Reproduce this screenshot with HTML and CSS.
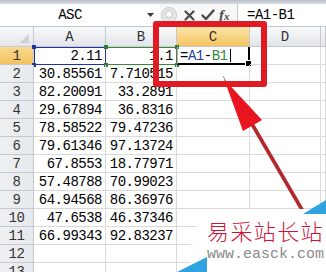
FILE: index.html
```html
<!DOCTYPE html>
<html>
<head>
<meta charset="utf-8">
<link rel="stylesheet" href="styles.css">
</head>
<body>
<div class="app">
  <div class="strip"></div>
  <div class="fbar">
    <div class="namebox">ASC</div>
    <div class="dd"><svg width="7" height="4" viewBox="0 0 7 4"><path d="M0 0H7L3.5 4Z" fill="#3a3a3a"/></svg></div>
    <div class="tools">
      <span class="knob"></span>
      <svg class="ico-x" width="11" height="11" viewBox="0 0 11 11"><path d="M1.5 1.5L9.5 9.5M9.5 1.5L1.5 9.5" stroke="#4a4a4a" stroke-width="2.2" stroke-linecap="round"/></svg>
      <svg class="ico-ok" width="14" height="12" viewBox="0 0 14 12"><path d="M1.5 6.5L5 10L12.5 1.5" fill="none" stroke="#4a4a4a" stroke-width="2.4" stroke-linecap="round" stroke-linejoin="round"/></svg>
      <span class="fx">f<span class="fxx">x</span></span>
    </div>
    <div class="formula">=A1-B1</div>
  </div>
  <div class="sheet">
    <div class="corner"><span class="tri"></span></div>
    <div class="ch">A</div><div class="ch">B</div><div class="ch sel">C</div><div class="ch">D</div><div class="ch"></div>

    <div class="rh sel">1</div>
    <div class="c n">2.11<span class="ref blue"><i class="h tl"></i><i class="h tr"></i><i class="h bl"></i><i class="h br"></i></span></div>
    <div class="c n">1.1<span class="ref green"><i class="h tl"></i><i class="h tr"></i><i class="h bl"></i><i class="h br"></i></span></div>
    <div class="c fcell">=<span class="rb">A1</span>-<span class="rg">B1</span><i class="caret"></i><span class="edit"><i class="fill"></i></span></div>
    <div class="c"></div><div class="c"></div>

    <div class="rh">2</div><div class="c n">30.85561</div><div class="c n">7.710515</div><div class="c"></div><div class="c"></div><div class="c"></div>
    <div class="rh">3</div><div class="c n">82.20091</div><div class="c n">33.2891</div><div class="c"></div><div class="c"></div><div class="c"></div>
    <div class="rh">4</div><div class="c n">29.67894</div><div class="c n">36.8316</div><div class="c"></div><div class="c"></div><div class="c"></div>
    <div class="rh">5</div><div class="c n">78.58522</div><div class="c n">79.47236</div><div class="c"></div><div class="c"></div><div class="c"></div>
    <div class="rh">6</div><div class="c n">79.61346</div><div class="c n">97.13724</div><div class="c"></div><div class="c"></div><div class="c"></div>
    <div class="rh">7</div><div class="c n">67.8553</div><div class="c n">18.77971</div><div class="c"></div><div class="c"></div><div class="c"></div>
    <div class="rh">8</div><div class="c n">57.48788</div><div class="c n">70.99023</div><div class="c"></div><div class="c"></div><div class="c"></div>
    <div class="rh">9</div><div class="c n">64.94568</div><div class="c n">86.36976</div><div class="c"></div><div class="c"></div><div class="c"></div>
    <div class="rh">10</div><div class="c n">47.6538</div><div class="c n">46.37346</div><div class="c"></div><div class="c"></div><div class="c"></div>
    <div class="rh">11</div><div class="c n">66.99343</div><div class="c n">92.83237</div><div class="c"></div><div class="c"></div><div class="c"></div>
    <div class="rh">12</div><div class="c"></div><div class="c"></div><div class="c"></div><div class="c"></div><div class="c"></div>
    <div class="rh">13</div><div class="c"></div><div class="c"></div><div class="c"></div><div class="c"></div><div class="c"></div>
  </div>

  <div class="redbox"></div>
  <svg class="arrow" width="326" height="272" viewBox="0 0 326 272">
    <line x1="252" y1="124" x2="308" y2="220" stroke="#b3262c" stroke-width="3.6"/>
    <line x1="223" y1="76" x2="232" y2="92" stroke="#9a9a9a" stroke-width="1"/>
    <polygon points="224,79 262,120 243,131" fill="#e8141f"/>
  </svg>

  <div class="wm">
    <svg class="wm-bg" width="156" height="76" viewBox="0 0 156 76">
      <polygon points="44,13 156,13 156,76 20,76 21,46 28,28" fill="#ffffff"/>
      <polygon points="133,18 156,4 156,18" fill="#2fa3df"/>
      <polygon points="7,76 37,61 37,76" fill="#2fa3df"/>
    </svg>
    <div class="wm-title">易采站长站</div>
    <div class="wm-url">www.easck.com</div>
  </div>
</div>
</body>
</html>
```

FILE: styles.css
```css
body {
  margin: 0;
  background: #fff;
}

.app {
  position: relative;
  width: 326px;
  height: 272px;
  overflow: hidden;
  background: #fff;
  font-family: "Liberation Mono", "DejaVu Sans Mono", monospace;
  font-size: 14px;
  color: #000;
}

.strip {
  height: 4px;
  background: linear-gradient(#b9bec5, #d9dde2);
}

.fbar {
  display: flex;
  align-items: center;
  height: 23px;
  box-sizing: border-box;
  border-bottom: 1px solid #c3c8ce;
  background: #fff;
}

.namebox {
  width: 140px;
  text-align: center;
  letter-spacing: -0.5px;
}

.dd {
  width: 20px;
  display: flex;
  justify-content: center;
  align-items: center;
}

.tools {
  width: 77px;
  height: 22px;
  display: flex;
  align-items: center;
  border-right: 1px solid #c8c8c8;
  background: #f7f7f7;
}

.knob {
  width: 14px;
  height: 14px;
  margin-left: 1px;
  border-radius: 50%;
  border: 1px solid #c9c9c9;
  background: radial-gradient(circle at 50% 45%, #ffffff 0 2px, #d6d6d6 3px, #eeeeee 7px);
}

.ico-x {
  margin-left: 7px;
}

.ico-ok {
  margin-left: 6px;
}

.fx {
  margin-left: 4px;
  font-family: "Liberation Serif", serif;
  font-style: italic;
  font-weight: bold;
  font-size: 15px;
  color: #4a4a4a;
}

.fxx {
  font-size: 11px;
}

.formula {
  padding-left: 9px;
  letter-spacing: -0.5px;
}

.sheet {
  position: relative;
  display: grid;
  grid-template-columns: 34px 72px 71px 73px 71px 5px;
  grid-template-rows: 20px;
  grid-auto-rows: 18px;
}

.sheet > div {
  position: relative;
  box-sizing: border-box;
  border-right: 1px solid #dadada;
  border-bottom: 1px solid #dadada;
  line-height: 18px;
  white-space: nowrap;
}

.corner {
  background: linear-gradient(#f7f8f9, #e4e7ea);
  border-color: #c6cacf !important;
}

.tri {
  position: absolute;
  right: 4px;
  bottom: 3px;
  width: 0;
  height: 0;
  border-left: 9px solid transparent;
  border-bottom: 9px solid #cdd1d6;
}

.ch {
  background: linear-gradient(#f8f9fa, #e2e5e9);
  border-color: #c6cacf !important;
  text-align: center;
  color: #333;
  line-height: 20px !important;
}

.ch.sel {
  background: linear-gradient(#fbe5a8, #f4c462);
}

.rh {
  background: linear-gradient(90deg, #eef0f3, #e6e9ed);
  border-color: #c6cacf !important;
  text-align: center;
  color: #333;
  letter-spacing: -0.5px;
}

.rh.sel {
  background: linear-gradient(#f9da8e, #f2c15c);
}

.n {
  text-align: right;
  padding-right: 3px;
  letter-spacing: -0.5px;
}

.fcell {
  padding-left: 3px;
  letter-spacing: -0.5px;
}

.rb {
  color: #2b3aa8;
}

.rg {
  color: #2f8a3a;
}

.caret {
  display: inline-block;
  width: 1px;
  height: 13px;
  margin-left: 3px;
  vertical-align: -2px;
  background: #000;
}

.ref {
  position: absolute;
  left: 0;
  top: 0;
  right: -1px;
  bottom: -1px;
  border: 1px solid;
}

.ref.blue {
  color: #1f34a0;
  border-color: #1f34a0;
}

.ref.green {
  color: #2e7d32;
  border-color: #3b8a3b;
  border-left-color: transparent;
}

.h {
  position: absolute;
  width: 4px;
  height: 4px;
  background: currentColor;
}

.h.tl { left: -3px; top: -3px; }
.h.tr { right: -3px; top: -3px; }
.h.bl { left: -3px; bottom: -3px; }
.h.br { right: -3px; bottom: -3px; }

.edit {
  position: absolute;
  left: 0;
  top: 0;
  right: -1px;
  bottom: -1px;
  border-right: 2px solid #000;
  border-bottom: 2px solid #000;
  border-left: 1px solid #c9a3c9;
}

.fill {
  position: absolute;
  right: -4px;
  bottom: -4px;
  width: 5px;
  height: 5px;
  background: #000;
  border: 1px solid #fff;
}

.redbox {
  position: absolute;
  left: 153px;
  top: 21px;
  width: 114px;
  height: 66px;
  box-sizing: border-box;
  border: 6px solid #e11b24;
  border-radius: 3px;
}

.arrow {
  position: absolute;
  left: 0;
  top: 0;
}

.wm {
  position: absolute;
  left: 170px;
  top: 196px;
  width: 156px;
  height: 76px;
  box-sizing: border-box;
  padding: 22px 0 0 37px;
}

.wm-bg {
  position: absolute;
  left: 0;
  top: 0;
}

.wm-title {
  position: relative;
  font-family: "Noto Sans CJK SC", sans-serif;
  font-weight: 300;
  font-size: 22px;
  line-height: 24px;
  letter-spacing: 1.4px;
  color: #cc1236;
}

.wm-url {
  position: relative;
  margin-top: 5px;
  font-family: "Liberation Mono", monospace;
  font-size: 15px;
  line-height: 16px;
  color: #8a8a8a;
}
```
